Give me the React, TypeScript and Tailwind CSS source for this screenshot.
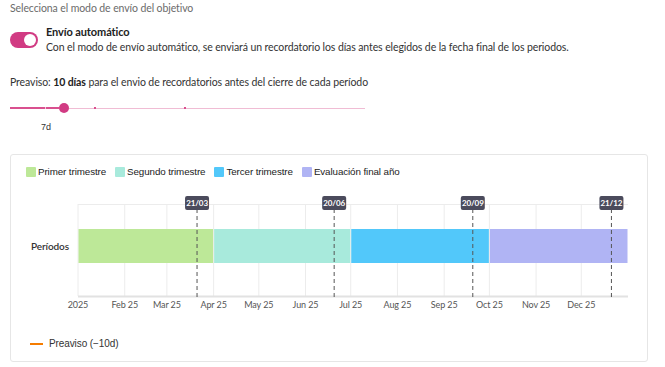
import React from "react";

const months = [
  { d: 0, l: "2025" },
  { d: 31, l: "Feb 25" },
  { d: 59, l: "Mar 25" },
  { d: 90, l: "Apr 25" },
  { d: 120, l: "May 25" },
  { d: 151, l: "Jun 25" },
  { d: 181, l: "Jul 25" },
  { d: 212, l: "Aug 25" },
  { d: 243, l: "Sep 25" },
  { d: 273, l: "Oct 25" },
  { d: 304, l: "Nov 25" },
  { d: 334, l: "Dec 25" },
];

const periods = [
  { name: "Primer trimestre", from: 0, to: 90, color: "#bde898" },
  { name: "Segundo trimestre", from: 90, to: 181, color: "#a8eadc" },
  { name: "Tercer trimestre", from: 181, to: 273, color: "#52c8fa" },
  { name: "Evaluación final año", from: 273, to: 365, color: "#b0b4f4" },
];

const markers = [
  { d: 79, l: "21/03" },
  { d: 170, l: "20/06" },
  { d: 262, l: "20/09" },
  { d: 354, l: "21/12" },
];

const X0 = 68;
const W = 550;
const x = (d: number) => X0 + (d * W) / 365;

function Timeline() {
  return (
    <svg width="638" height="124" className="block">
      {/* grid */}
      {months.map((m) => (
        <line key={m.l} x1={x(m.d)} x2={x(m.d)} y1={15} y2={107} stroke="#ececec" strokeWidth={1} />
      ))}
      <line x1={X0} x2={X0 + W} y1={15.5} y2={15.5} stroke="#ececec" />
      <line x1={X0} x2={X0 + W} y1={107.5} y2={107.5} stroke="#e2e2e2" strokeWidth={2} />

      {periods.map((p) => (
        <rect key={p.name} x={x(p.from) + 0.5} y={40} width={x(p.to) - x(p.from) - 1} height={34} fill={p.color} />
      ))}

      <text x={21} y={61} fontSize={10} fontWeight={600} fill="#333" fontFamily="Lato, sans-serif">
        Períodos
      </text>

      {months.map((m) => (
        <text
          key={m.l}
          x={x(m.d)}
          y={119}
          fontSize={9}
          fill="#555"
          textAnchor="middle"
          fontFamily="Lato, sans-serif"
        >
          {m.l}
        </text>
      ))}

      {markers.map((m) => (
        <g key={m.l}>
          <line x1={x(m.d)} x2={x(m.d)} y1={20} y2={108} stroke="#555" strokeDasharray="4 3" />
          <rect x={x(m.d) - 12} y={7} width={24} height={14} rx={2} fill="#4b4b5c" />
          <text
            x={x(m.d)}
            y={17}
            fontSize={8}
            fontWeight={700}
            fill="#fff"
            textAnchor="middle"
            fontFamily="Lato, sans-serif"
          >
            {m.l}
          </text>
        </g>
      ))}
    </svg>
  );
}

function Slider() {
  return (
    <div className="mt-[13px] flex h-[12px] w-[355px] items-center">
      <span className="h-[2px] w-[35px] bg-[#d9508f]" />
      <span className="h-[2px] w-px bg-[#f3c4da]" />
      <span className="h-[2px] w-[13px] bg-[#d9508f]" />
      <span className="h-[10px] w-[10px] shrink-0 rounded-full bg-[#d13b83]" />
      <div className="flex h-px flex-1 items-center bg-[#f0bcd4]">
        <span className="ml-[25px] h-[2px] w-[2px] bg-[#d9508f]" />
        <span className="ml-[88px] h-[2px] w-[2px] bg-[#d9508f]" />
      </div>
    </div>
  );
}

export default function App() {
  return (
    <div className="h-[367px] w-[665px] overflow-hidden bg-white px-[10px] font-['Lato',sans-serif] text-[10.5px] tracking-[-0.1px] text-[#333]">
      <p className="pt-[1px] leading-[14px] text-[#6b6b6b]">Selecciona el modo de envío del objetivo</p>

      <div className="mt-[10px] flex gap-[8px]">
        <div className="mt-[7px] flex h-[16px] w-[28px] items-center justify-end rounded-full bg-[#d13b83] pr-[2px]">
          <span className="h-[12px] w-[12px] rounded-full bg-white" />
        </div>
        <div className="leading-[14px]">
          <p className="text-[11px] font-bold text-[#222]">Envío automático</p>
          <p className="mt-[1px] text-[#333]">
            Con el modo de envío automático, se enviará un recordatorio los días antes elegidos de la fecha final de
            los periodos.
          </p>
        </div>
      </div>

      <p className="mt-[21px] leading-[14px]">
        Preaviso: <b className="text-[#222]">10 días</b> para el envio de recordatorios antes del cierre de cada período
      </p>

      <Slider />
      <p className="mt-[7px] pl-[31px] font-['Liberation_Sans',sans-serif] text-[9px] leading-[12px] text-[#333]">7d</p>

      {/* chart card */}
      <div className="mt-[21px] h-[208px] w-[638px] rounded-[3px] border border-[#e6e6e6]">
        <div className="flex items-center gap-[9px] pl-[15px] pt-[10px] font-['Liberation_Sans',sans-serif] text-[9.8px] leading-[14px] text-[#222]">
          {periods.map((p) => (
            <div key={p.name} className="flex items-center gap-[2px]">
              <span className="h-[10px] w-[10px] rounded-[1px]" style={{ background: p.color }} />
              {p.name}
            </div>
          ))}
        </div>
        <div className="-ml-px mt-[10px]">
          <Timeline />
        </div>
        <div className="mt-[24px] flex items-center gap-[6px] pl-[19px] font-['Liberation_Sans',sans-serif] text-[10px] leading-[14px] text-[#333]">
          <span className="h-[2px] w-[13px] bg-[#f57c00]" />
          Preaviso (−10d)
        </div>
      </div>
    </div>
  );
}
